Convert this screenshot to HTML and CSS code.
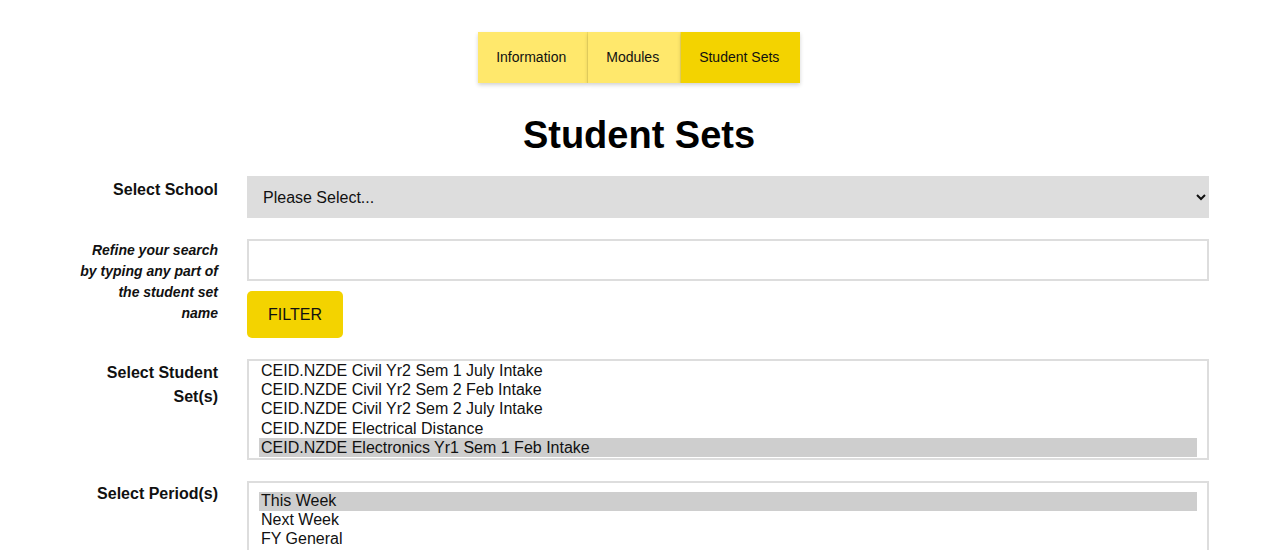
FILE: index.html
```html
<!DOCTYPE html>
<html lang="en">
<head>
<meta charset="utf-8">
<title>Student Sets</title>
<link rel="stylesheet" href="styles.css">
</head>
<body>
<div class="page">
  <nav class="tabs">
    <a class="tab">Information</a>
    <a class="tab">Modules</a>
    <a class="tab active">Student Sets</a>
  </nav>
  <h1 class="title">Student Sets</h1>
  <form class="form">
    <div class="row">
      <label class="label">Select School</label>
      <div class="field">
        <select class="school">
          <option>Please Select...</option>
        </select>
      </div>
    </div>
    <div class="row">
      <label class="label label-small">Refine your search by typing any part of the student set name</label>
      <div class="field">
        <input class="search" type="text">
        <button class="filter" type="button">FILTER</button>
      </div>
    </div>
    <div class="row">
      <label class="label">Select Student Set(s)</label>
      <div class="field">
        <div class="listbox sets">
          <div class="opt">CEID.NZDE Civil Yr2 Sem 1 July Intake</div>
          <div class="opt">CEID.NZDE Civil Yr2 Sem 2 Feb Intake</div>
          <div class="opt">CEID.NZDE Civil Yr2 Sem 2 July Intake</div>
          <div class="opt">CEID.NZDE Electrical Distance</div>
          <div class="opt selected">CEID.NZDE Electronics Yr1 Sem 1 Feb Intake</div>
        </div>
      </div>
    </div>
    <div class="row">
      <label class="label label-period">Select Period(s)</label>
      <div class="field">
        <div class="listbox periods">
          <div class="opt selected">This Week</div>
          <div class="opt">Next Week</div>
          <div class="opt">FY General</div>
        </div>
      </div>
    </div>
  </form>
</div>
</body>
</html>
```
FILE: styles.css
```css
html, body {
  margin: 0;
  padding: 0;
  background: #fff;
}
body {
  font-family: "Liberation Sans", Arial, sans-serif;
  color: #111;
  overflow: hidden;
}
.page {
  width: 1140px;
  margin: 0 auto;
  padding-top: 32px;
}
.tabs {
  display: flex;
  justify-content: center;
}
.tabs .tab {
  display: block;
  height: 51px;
  line-height: 51px;
  padding: 0 20.5px 0 18.5px;
  font-size: 14px;
  color: #111;
  background: #ffe86c;
  box-shadow: 0 2px 4px rgba(0, 0, 0, 0.18);
  border-right: 1px solid #f0da62;
}
.tabs .tab.active {
  background: #f3d300;
  border-right: none;
  padding-right: 21px;
}
.title {
  margin: 30px 0 19px;
  font-size: 38px;
  line-height: 44px;
  font-weight: bold;
  text-align: center;
  color: #000;
}
.form {
  display: flex;
  flex-direction: column;
  gap: 21px;
}
.row {
  display: grid;
  grid-template-columns: 149px 962px;
  column-gap: 29px;
  align-items: start;
}
.label {
  text-align: right;
  font-weight: bold;
  font-size: 16px;
  line-height: 24px;
  padding-top: 2px;
  color: #111;
}
.label-period {
  padding-top: 1px;
}
.label-small {
  font-size: 14px;
  line-height: 21px;
  font-style: italic;
  padding-top: 1px;
  padding-left: 10.5px;
}
.field {
  display: flex;
  flex-direction: column;
  align-items: flex-start;
}
.school {
  width: 100%;
  height: 42px;
  border: none;
  background-color: #dddddd;
  padding: 0 10px 0 12px;
  font-family: "Liberation Sans", Arial, sans-serif;
  font-size: 16px;
  color: #111;
  border-radius: 0;
  outline: none;
}
.search {
  box-sizing: border-box;
  width: 100%;
  height: 42px;
  border: 2px solid #dddddd;
  background: #fff;
  margin: 0;
  padding: 0 12px;
  font-family: "Liberation Sans", Arial, sans-serif;
  font-size: 16px;
  outline: none;
}
.filter {
  margin-top: 10px;
  width: 96px;
  height: 47px;
  border: none;
  border-radius: 5px;
  background: #f3d300;
  font-family: "Liberation Sans", Arial, sans-serif;
  font-size: 16px;
  color: #111;
  padding: 0;
}
.listbox {
  box-sizing: border-box;
  width: 100%;
  height: 101px;
  border: 2px solid #dddddd;
  padding: 0 10px;
  overflow: hidden;
  font-size: 16px;
  color: #111;
}
.listbox.sets {
  padding-top: 0;
}
.listbox.periods {
  padding-top: 9px;
}
.opt {
  height: 19.2px;
  line-height: 19.2px;
  padding: 0 2px;
  white-space: nowrap;
}
.listbox.periods .opt {
  height: 19px;
  line-height: 18px;
}
.opt.selected {
  background: #cecece;
}
```
